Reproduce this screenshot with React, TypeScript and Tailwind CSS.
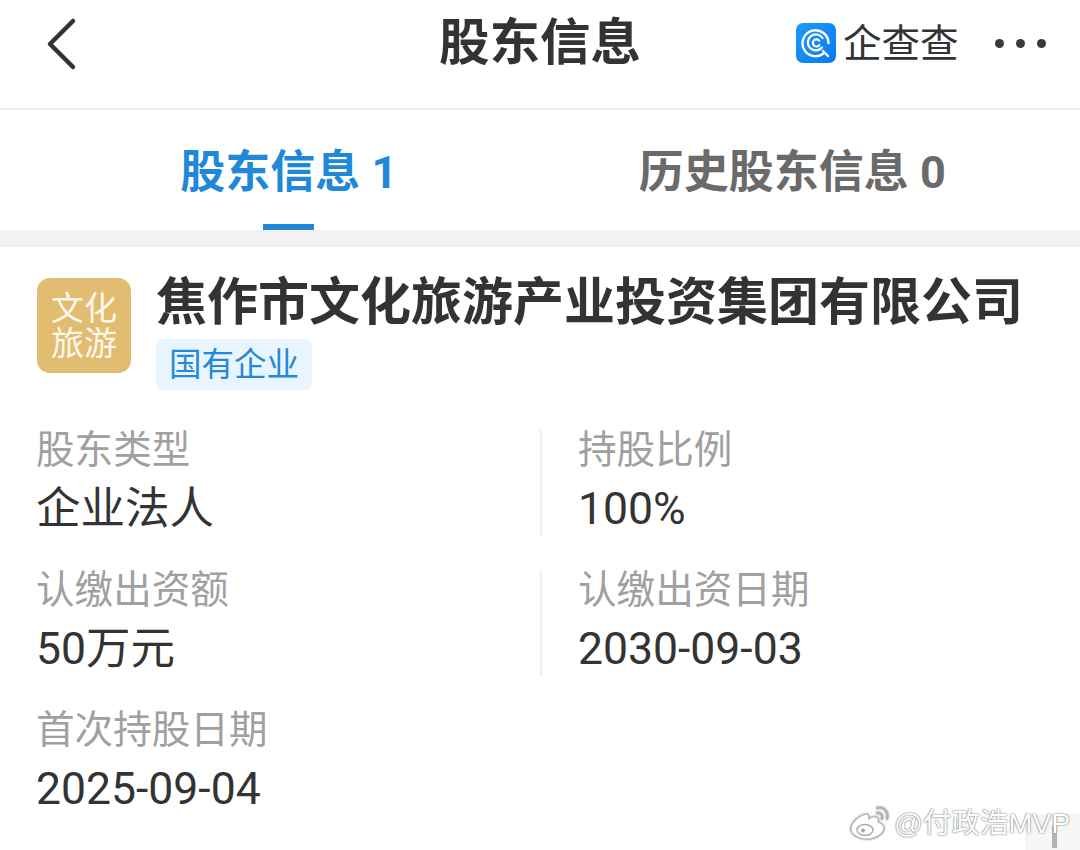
const cjk = "font-['Roboto','Noto_Sans_CJK_SC',sans-serif]"

function Field({ label, value, divider }: { label: string; value?: string; divider?: boolean }) {
  return (
    <div className={divider ? "h-[106px] pl-[36px] border-l-2 border-[#eeeeee]" : "h-[106px] pl-[36px]"}>
      <div className="text-[38.6px] leading-[40px] text-[#a0a0a0]">{label}</div>
      <div className="mt-[19px] text-[44.5px] leading-[41px] text-[#333333]">{value}</div>
    </div>
  )
}

function QccLogo() {
  return (
    <svg width="40" height="40" viewBox="0 0 40 40" className="shrink-0">
      <defs>
        <linearGradient id="qcc" x1="0" y1="0" x2="1" y2="1">
          <stop offset="0" stopColor="#1f9bf5" />
          <stop offset="1" stopColor="#0a78f0" />
        </linearGradient>
      </defs>
      <rect width="40" height="40" rx="7" fill="url(#qcc)" />
      <path d="M27.5 30.5A13 13 0 1 1 32.5 20" fill="none" stroke="#fff" strokeWidth="2.4" strokeLinecap="round" />
      <path d="M26 24.5A8 8 0 1 1 26.5 15" fill="none" stroke="#fff" strokeWidth="2.2" strokeLinecap="round" />
      <path d="M23.2 22.2A3.6 3.6 0 1 1 23.2 17.6" fill="none" stroke="#fff" strokeWidth="2.2" strokeLinecap="round" />
      <path d="M27 28l5 5" fill="none" stroke="#fff" strokeWidth="2.4" strokeLinecap="round" />
    </svg>
  )
}

function WeiboIcon() {
  return (
    <svg width="42" height="36" viewBox="0 0 42 36" fill="none" className="drop-shadow-[0_0_1px_rgba(0,0,0,0.45)]">
      <path d="M17 9C9 11 2 18 2 24c0 6 8 10 16 10s17-5 17-11c0-4-4-5-6-6 1-3 0-6-5-5-2 0-4 2-4 2 0-3-1-6-3-5z" fill="#ffffff" stroke="#b5b5b5" strokeWidth="1.2" />
      <ellipse cx="16" cy="25" rx="8" ry="5.5" fill="#ffffff" stroke="#a8a8a8" strokeWidth="1.4" />
      <circle cx="14" cy="25.5" r="2" fill="#a8a8a8" />
      <path d="M28 8c4-1 6 2 5 6M28 3c7-2 12 4 10 11" stroke="#b0b0b0" strokeWidth="2" strokeLinecap="round" />
    </svg>
  )
}

export default function App() {
  return (
    <div className={`relative w-[1080px] h-[850px] overflow-hidden bg-white ${cjk}`}>
      {/* top bar */}
      <header className="h-[110px] border-b-2 border-[#eeeeee] flex items-start">
        <div className="w-[796px] h-[86px] flex items-center relative">
          <svg width="34" height="54" viewBox="0 0 34 54" fill="none" className="ml-[45px] mt-[2px] shrink-0">
            <path d="M28 4L5 27l23 23" stroke="#333333" strokeWidth="4.5" strokeLinecap="round" strokeLinejoin="round" />
          </svg>
          <h1 className="ml-[360px] text-[50.5px] leading-[60px] font-bold text-[#333333] whitespace-nowrap">股东信息</h1>
        </div>
        <div className="h-[86px] flex items-center">
          <QccLogo />
          <span className="ml-[7px] mt-[2px] text-[38.5px] leading-[44px] font-normal text-[#333333] whitespace-nowrap">企查查</span>
          <div className="ml-[36px] flex gap-[12px]">
            <span className="w-[9px] h-[9px] rounded-full bg-[#3a3a3a]" />
            <span className="w-[9px] h-[9px] rounded-full bg-[#3a3a3a]" />
            <span className="w-[9px] h-[9px] rounded-full bg-[#3a3a3a]" />
          </div>
        </div>
      </header>

      {/* tabs */}
      <nav className="h-[120px] grid grid-cols-2 pl-[34px] pr-[35px]">
        <div className="relative flex justify-center pl-[4px] pt-[37px] text-[45px] leading-[52px] font-bold text-[#1f88d9] whitespace-nowrap">
          股东信息 1
          <span className="absolute bottom-0 left-[229px] w-[51px] h-[6px] bg-[#1f88d9]" />
        </div>
        <div className="flex justify-center pt-[37px] text-[45px] leading-[52px] font-bold text-[#6a6a6a] whitespace-nowrap">
          历史股东信息 0
        </div>
      </nav>
      <div className="h-[17px] bg-[#f2f2f2]" />

      {/* company */}
      <section className="pt-[31px] pl-[37px] flex">
        <div className="w-[94px] h-[95px] rounded-[13px] bg-[#e2bc70] flex items-center justify-center text-center text-[33px] leading-[35px] text-[#fdf8ec]">
          <div>文化<br />旅游</div>
        </div>
        <div className="ml-[25px]">
          <div className="text-[51px] leading-[50px] font-bold text-[#333333] whitespace-nowrap">焦作市文化旅游产业投资集团有限公司</div>
          <div className="mt-[11px] w-[156px] h-[51px] rounded-[7px] bg-[#e9f5fe] flex items-center justify-center pt-[2px] text-[32.5px] text-[#2588d8] whitespace-nowrap">国有企业</div>
        </div>
      </section>

      {/* details */}
      <section className="mt-[40px] grid grid-cols-2 gap-y-[34px]">
        <Field label="股东类型" value="企业法人" />
        <Field label="持股比例" value="100%" divider />
        <Field label="认缴出资额" value="50万元" />
        <Field label="认缴出资日期" value="2030-09-03" divider />
        <Field label="首次持股日期" value="2025-09-04" />
      </section>

      {/* watermark */}
      <div className="absolute right-0 bottom-0 w-[55px] h-[36px] bg-[#f6f6f6]" />
      <div className="absolute left-[1052px] top-[826px] w-[5px] h-[22px] bg-[#b4b4b4]" />
      <div className="absolute left-[849px] top-[805px] flex items-center">
        <WeiboIcon />
        <span className="ml-[3px] text-[28.5px] leading-[36px] text-white font-['Liberation_Sans','Noto_Sans_CJK_SC',sans-serif] whitespace-nowrap [text-shadow:0_0_2px_#777,0_0_1px_#777]">@付政浩MVP</span>
      </div>
    </div>
  )
}
